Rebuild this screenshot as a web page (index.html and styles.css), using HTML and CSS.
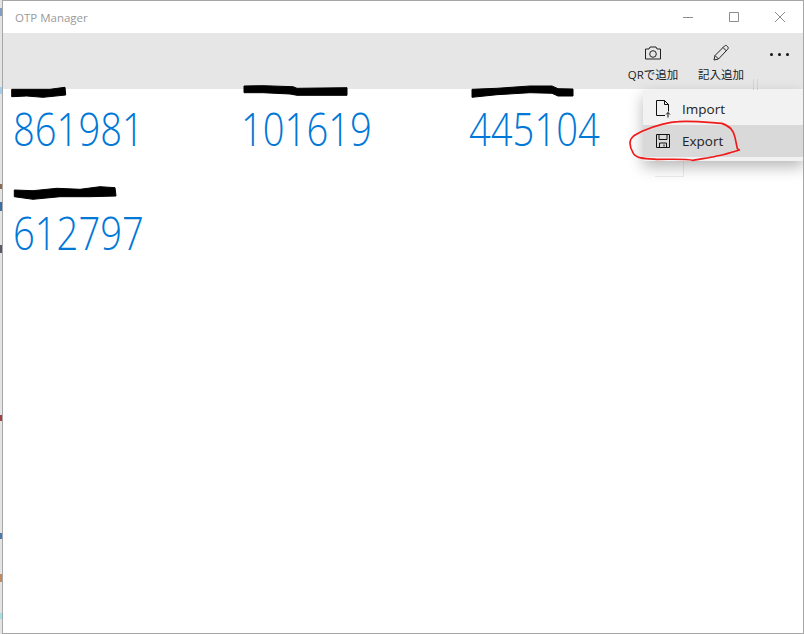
FILE: index.html
```html
<!DOCTYPE html>
<html lang="ja">
<head>
<meta charset="utf-8">
<title>OTP Manager</title>
<link rel="stylesheet" href="styles.css">
</head>
<body>
<div class="desktop">
  <svg class="strip" width="2" height="634" viewBox="0 0 2 634" aria-hidden="true">
    <rect y="8" width="2" height="8" fill="#7f9fc0"/>
    <rect y="87" width="2" height="7" fill="#9fd0f0"/>
    <rect y="184" width="2" height="5" fill="#8a6a50"/>
    <rect y="202" width="2" height="9" fill="#3b6ea5"/>
    <rect y="245" width="2" height="8" fill="#555a66"/>
    <rect y="415" width="2" height="6" fill="#a04040"/>
    <rect y="533" width="2" height="6" fill="#4a78b0"/>
    <rect y="574" width="2" height="8" fill="#c08a60"/>
    <rect y="613" width="2" height="6" fill="#a0e0e8"/>
  </svg>
  <div class="window">
    <header class="titlebar">
      <span class="title">OTP Manager</span>
      <div class="controls">
        <span class="control"><svg width="12" height="12" viewBox="0 0 12 12"><path d="M1 6.500h10"/></svg></span>
        <span class="control"><svg width="12" height="12" viewBox="0 0 12 12"><path d="M1.500 1.500h9v9h-9z"/></svg></span>
        <span class="control"><svg width="12" height="12" viewBox="0 0 12 12"><path d="M1 1l10 10M11 1L1 11"/></svg></span>
      </div>
    </header>
    <nav class="commandbar">
      <div class="command">
        <svg class="command-icon" width="18" height="15" viewBox="0 0 18 15"><path d="M1.500 3.500h3.500l1-2h6l1 2h3.500v10h-15z"/><circle cx="9" cy="8.500" r="3.300"/></svg>
        <span class="command-label">QRで追加</span>
      </div>
      <div class="command">
        <svg class="command-icon" width="18" height="18" viewBox="0 0 18 18"><path d="M2 16l1-4.500L12.500 2c.8-.8 1.800-.8 2.500 0l.7.7c.7.800.7 1.700 0 2.500L6.500 15zM3 11.500L6.500 15M11 3.500l3.500 3.500"/></svg>
        <span class="command-label">記入追加</span>
      </div>
      <div class="more"><i></i><i></i><i></i></div>
    </nav>
    <main class="tiles">
      <section class="tile">
        <svg class="redaction" width="110" height="14" viewBox="0 0 110 14"><path d="M-.3 5.300L18 5.300 38 5.300 53 3.300 53.700 11 31 13.300 14.700 12-.3 12.700Z"/></svg>
        <div class="code">861981</div>
      </section>
      <section class="tile">
        <svg class="redaction" width="110" height="14" viewBox="0 0 110 14"><path d="M4 2L23 1.700 53 2.700 57 4.300 107 3.700 107 11.300 57 11.300 50 10 23 8.700 4 8.700Z"/></svg>
        <div class="code">101619</div>
      </section>
      <section class="tile">
        <svg class="redaction" width="110" height="14" viewBox="0 0 110 14"><path d="M4 5.300L29 4.300 62 2 84 2 90 4.700 105 5 105 12 90 12 84 9.300 62 8.700 29 10.700 4 13.300Z"/></svg>
        <div class="code">445104</div>
      </section>
      <section class="tile">
        <svg class="redaction" width="110" height="14" viewBox="0 0 110 14"><path d="M2.300 2L21 2.700 45 .3 68 1.300 88-1.300 103-.3 104 8 78 8.700 48 8.700 21 11.300 2.300 8.700Z"/></svg>
        <div class="code">612797</div>
      </section>
    </main>
    <div class="ghost-box"></div>
    <div class="ghost-lines"></div>
    <div class="menu">
      <div class="menu-item">
        <svg class="menu-icon" width="16" height="18" viewBox="0 0 16 18"><path d="M10 15.500H1.500v-15h8l4 4v7M9.500.500v4h4M13 17.500v-5M11 14.500l2-2 2 2"/></svg>
        <span>Import</span>
      </div>
      <div class="menu-item menu-item-active">
        <svg class="menu-icon" width="16" height="16" viewBox="0 0 16 16"><path d="M1.500 1.500h13v13h-13zM4 1.500v5h8v-5M4.500 14.500v-4.500h7v4.500M9 11.500v2"/></svg>
        <span>Export</span>
      </div>
    </div>
    <svg class="annotation" width="120" height="48" viewBox="45 111 360 144" aria-hidden="true"><path d="M60 190C60 170 75 165 100 152 130 140 170 126 205 125 250 122 300 128 335 130 360 138 370 150 375 172L382 206 388 210C365 216 345 225 320 228 295 235 270 236 250 241 225 236 190 238 140 238 105 236 80 236 70 220 62 208 60 200 60 190Z"/></svg>
  </div>
</div>
</body>
</html>
```
FILE: styles.css
```css
* { box-sizing: border-box; }
html, body { margin: 0; height: 100%; overflow: hidden; }
body { font-family: "Open Sans", "Noto Sans CJK JP", sans-serif; background: #e4e4e4; }
.desktop { display: flex; width: 804px; height: 634px; }
.strip { display: block; flex: none; }
.window {
  position: relative;
  flex: 1;
  display: flex;
  flex-direction: column;
  background: #fff;
  border: 1px solid #a6a6a6;
  overflow: hidden;
}
.titlebar {
  flex: none;
  height: 32px;
  display: flex;
  align-items: center;
  justify-content: space-between;
  padding-left: 12px;
}
.title { font-size: 11.500px; color: #9a9a9a; }
.controls { display: flex; }
.control { width: 46px; height: 32px; display: flex; align-items: center; justify-content: center; }
.control svg { fill: none; stroke: #8c8c8c; stroke-width: 1; }
.commandbar {
  flex: none;
  height: 56px;
  background: #e6e6e6;
  display: flex;
  justify-content: flex-end;
}
.command {
  width: 68px;
  display: flex;
  flex-direction: column;
  align-items: center;
  padding-top: 11px;
}
.command-icon { height: 18px; display: block; fill: none; stroke: #222; stroke-width: 1; }
.command-label { margin-top: 5px; font-size: 11.500px; line-height: 16px; color: #222; white-space: nowrap; }
.more { width: 48px; display: flex; justify-content: center; gap: 5px; padding-top: 20px; }
.more i { width: 3px; height: 3px; border-radius: 50%; background: #111; }
.tiles {
  position: relative;
  z-index: 1;
  margin-top: -5px;
  padding-left: 9px;
  display: grid;
  grid-template-columns: repeat(3, 228px);
  grid-auto-rows: 104px;
}
.redaction { display: block; overflow: visible; fill: #000; stroke: #000; stroke-width: 1; stroke-linejoin: round; }
.code {
  margin-top: 4px;
  margin-left: 1px;
  font-family: "Open Sans", sans-serif;
  font-weight: 300;
  font-size: 46px;
  line-height: 52px;
  color: #0078d7;
  transform: scaleX(.83);
  transform-origin: left center;
}
.menu {
  position: absolute;
  z-index: 3;
  left: 640px;
  top: 89px;
  width: 161px;
  height: 71px;
  padding: 3px 0;
  background: #f2f2f2;
  box-shadow: 0 6px 14px rgba(0, 0, 0, .28);
}
.menu-item {
  height: 32px;
  display: flex;
  align-items: center;
  gap: 11px;
  padding-left: 12px;
  font-size: 13.500px;
  color: #222;
}
.menu-item-active { background: #d9d9d9; }
.menu-icon { flex: none; fill: none; stroke: #111; stroke-width: 1; }
.annotation {
  position: absolute;
  z-index: 4;
  left: 622px;
  top: 116px;
  fill: none;
  stroke: #f01a1a;
  stroke-width: 5;
  stroke-linejoin: round;
}
.ghost-box {
  position: absolute;
  left: 652px;
  top: 150px;
  width: 29px;
  height: 26px;
  border-right: 1px solid #ececec;
  border-bottom: 1px solid #ececec;
}
.ghost-lines {
  position: absolute;
  z-index: 2;
  left: 750px;
  top: 78px;
  width: 5px;
  height: 11px;
  border-left: 1px solid #d6d6d6;
  border-right: 1px solid #d6d6d6;
}
```
